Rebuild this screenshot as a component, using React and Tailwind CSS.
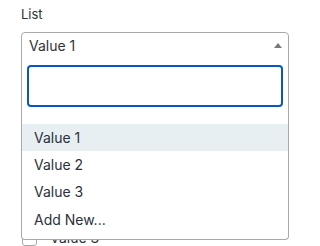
import { useState } from 'react'

const OPTIONS = ['Value 1', 'Value 2', 'Value 3', 'Add New...']

export default function App() {
  const [query, setQuery] = useState('')
  const selected = 'Value 1'

  return (
    <div className="w-[310px] h-[246px] overflow-hidden bg-white pl-[21px] pt-[6px] font-['Inter','Liberation_Sans',sans-serif]">
      <label className="block text-[13px] leading-[16px] text-[#2e3238]">List</label>

      <div className="relative mt-[10px] w-[268px]">
        {/* select trigger */}
        <button
          type="button"
          className="flex h-[27px] w-full items-center justify-between rounded-t-[4px] border border-[#a8a8a8] bg-white pl-[7px] pr-[6px] text-left"
        >
          <span className="text-[14px] leading-[18px] text-[#333333]">{selected}</span>
          <span className="h-0 w-0 border-x-[4px] border-b-[5px] border-x-transparent border-b-[#7a7a7a]" />
        </button>

        {/* field below, mostly hidden by the open menu */}
        <div className="mt-[171px] flex items-center gap-[13px] pl-[1px]">
          <span className="h-[15px] w-[15px] rounded-[3px] border border-[#a8a8a8] bg-white" />
          <span className="text-[14px] leading-[16px] text-[#2e3238]">Value 3</span>
        </div>

        {/* open menu */}
        <div className="absolute left-0 right-0 top-[26px] rounded-b-[4px] border border-t-0 border-[#a8a8a8] bg-white pb-[6px] pt-[7px]">
          <div className="px-[5px]">
            <input
              value={query}
              onChange={e => setQuery(e.target.value)}
              className="block h-[42px] w-full rounded-[4px] border-2 border-[#0a57c2] bg-white px-2 text-[14px] outline-none"
            />
          </div>
          <ul className="mt-[17px]">
            {OPTIONS.map(opt => (
              <li
                key={opt}
                className={`flex h-[27.3px] items-center pl-[12px] text-[14px] leading-[18px] text-[#2a313b] ${opt === selected ? 'bg-[#e8eff2]' : ''}`}
              >
                {opt}
              </li>
            ))}
          </ul>
        </div>
      </div>
    </div>
  )
}
